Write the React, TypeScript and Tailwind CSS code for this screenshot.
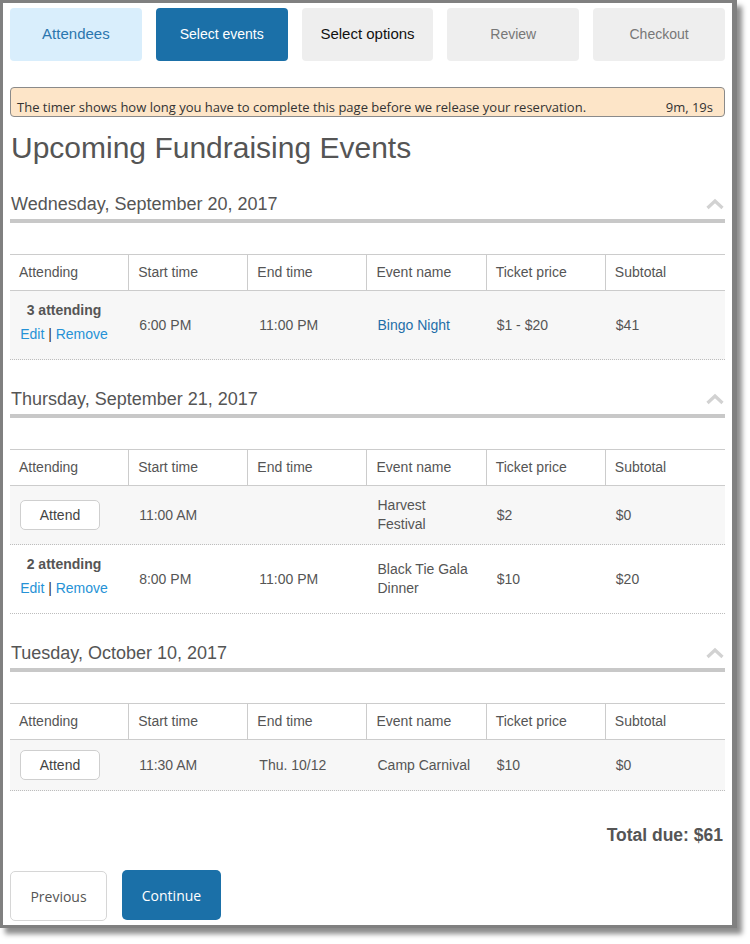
import React from "react";

type EventRow = {
  attending: number | null;
  start: string;
  end: string;
  name: string;
  link?: boolean;
  price: string;
  subtotal: string;
};

type Section = { date: string; rows: EventRow[] };

const sections: Section[] = [
  {
    date: "Wednesday, September 20, 2017",
    rows: [
      { attending: 3, start: "6:00 PM", end: "11:00 PM", name: "Bingo Night", link: true, price: "$1 - $20", subtotal: "$41" },
    ],
  },
  {
    date: "Thursday, September 21, 2017",
    rows: [
      { attending: null, start: "11:00 AM", end: "", name: "Harvest Festival", price: "$2", subtotal: "$0" },
      { attending: 2, start: "8:00 PM", end: "11:00 PM", name: "Black Tie Gala Dinner", price: "$10", subtotal: "$20" },
    ],
  },
  {
    date: "Tuesday, October 10, 2017",
    rows: [
      { attending: null, start: "11:30 AM", end: "Thu. 10/12", name: "Camp Carnival", price: "$10", subtotal: "$0" },
    ],
  },
];

const headers = ["Attending", "Start time", "End time", "Event name", "Ticket price", "Subtotal"];

function ChevronUp() {
  return (
    <svg width="18" height="12" viewBox="0 0 18 12" className="mr-[1px]">
      <polyline points="1.5,10 9,3 16.5,10" fill="none" stroke="#d2d2d2" strokeWidth="3.2" />
    </svg>
  );
}

function AttendingCell({ count }: { count: number | null }) {
  if (count === null) {
    return (
      <div className="flex items-center py-[10px] pl-[10px]">
        <button className="h-[30px] w-[80px] rounded-[5px] border border-[#cfcfcf] bg-white text-[14px] text-[#444]">
          Attend
        </button>
      </div>
    );
  }
  return (
    <div className="flex flex-col justify-center pb-[15px] pl-[10px] pt-[9px]">
      <div className="w-[88px] text-center">
        <div className="text-[14px] font-bold leading-[20px] text-[#555]">{count} attending</div>
        <div className="mt-[4px] text-[14px] leading-[20px] text-[#333]">
          <a className="text-[#2692d6]">Edit</a> | <a className="text-[#2692d6]">Remove</a>
        </div>
      </div>
    </div>
  );
}

function EventTable({ rows }: { rows: EventRow[] }) {
  return (
    <div className="mt-[31px] text-[14px] text-[#555]">
      <div className="grid h-[37px] grid-cols-6 border-y border-[#cccccc]">
        {headers.map((h, i) => (
          <div
            key={h}
            className={`flex items-center pl-[9px] ${i < 5 ? "border-r border-[#cccccc]" : ""}`}
          >
            {h}
          </div>
        ))}
      </div>
      {rows.map((r, i) => (
        <div
          key={r.name}
          className={`grid grid-cols-6 border-b border-dotted border-[#bdbdbd] ${i % 2 === 0 ? "bg-[#f7f7f7]" : "bg-white"}`}
        >
          <AttendingCell count={r.attending} />
          <div className="flex items-center py-[10px] pl-[10px] leading-[19px]">{r.start}</div>
          <div className="flex items-center py-[10px] pl-[11px] leading-[19px]">{r.end}</div>
          <div className={`flex items-center py-[10px] pl-[10px] pr-[13px] leading-[19px] ${r.link ? "text-[#1f6ea8]" : ""}`}>
            {r.name}
          </div>
          <div className="flex items-center py-[10px] pl-[10px] leading-[19px]">{r.price}</div>
          <div className="flex items-center py-[10px] pl-[10px] leading-[19px]">{r.subtotal}</div>
        </div>
      ))}
    </div>
  );
}

export default function App() {
  return (
    <div className="min-h-[944px] bg-white font-['Liberation_Sans',Arial,sans-serif]">
      <div className="h-[928px] w-[737px] border-b-[3px] border-l-[3px] border-r-[5px] border-t-[3px] border-[#808080] bg-white px-[7px] pt-[5px] shadow-[5px_6px_5px_rgba(0,0,0,0.45)]">
        {/* Steps */}
        <div className="flex h-[53px] gap-[14px] text-[14px]">
          <div className="flex flex-1 items-center justify-center rounded-[4px] bg-[#d9eefc] text-[15px] text-[#2b76ae]">
            Attendees
          </div>
          <div className="flex flex-1 items-center justify-center rounded-[4px] bg-[#1b70a8] text-white">
            Select events
          </div>
          <div className="flex flex-1 items-center justify-center rounded-[4px] bg-[#eeeeee] text-[15px] text-[#111]">
            Select options
          </div>
          <div className="flex flex-1 items-center justify-center rounded-[4px] bg-[#eeeeee] text-[#777]">
            Review
          </div>
          <div className="flex flex-1 items-center justify-center rounded-[4px] bg-[#eeeeee] text-[#777]">
            Checkout
          </div>
        </div>

        {/* Timer */}
        <div className="mt-[26px] flex h-[30px] items-end justify-between rounded-[4px] border border-[#8a8a8a] bg-[#fde5c8] pl-[6px] pr-[11px] font-['Open_Sans',sans-serif] text-[13px] leading-[18px] text-[#333]">
          <span>The timer shows how long you have to complete this page before we release your reservation.</span>
          <span>9m, 19s</span>
        </div>

        <h1 className="mt-[13px] pl-[1px] text-[30px] leading-[36px] text-[#555]">Upcoming Fundraising Events</h1>

        {sections.map((s, idx) => (
          <div key={s.date} className={idx === 0 ? "mt-[26px]" : "mt-[27px]"}>
            <div className="flex items-center justify-between">
              <h2 className="pl-[1px] text-[18px] leading-[24px] text-[#555]">{s.date}</h2>
              <ChevronUp />
            </div>
            <div className="mt-[3px] h-[4px] bg-[#c8c8c8]" />
            <EventTable rows={s.rows} />
          </div>
        ))}

        <div className="mt-[32px] pr-[2px] text-right text-[17.5px] font-bold leading-[24px] text-[#555]">
          Total due: $61
        </div>

        <div className="mt-[23px] flex items-start gap-[15px] font-['Open_Sans',sans-serif] text-[14px]">
          <button className="mt-[1px] h-[50px] w-[97px] rounded-[5px] border border-[#d6d6d6] bg-white text-[#555]">
            Previous
          </button>
          <button className="h-[50px] w-[99px] rounded-[5px] bg-[#1b70a8] text-white">Continue</button>
        </div>
      </div>
    </div>
  );
}
